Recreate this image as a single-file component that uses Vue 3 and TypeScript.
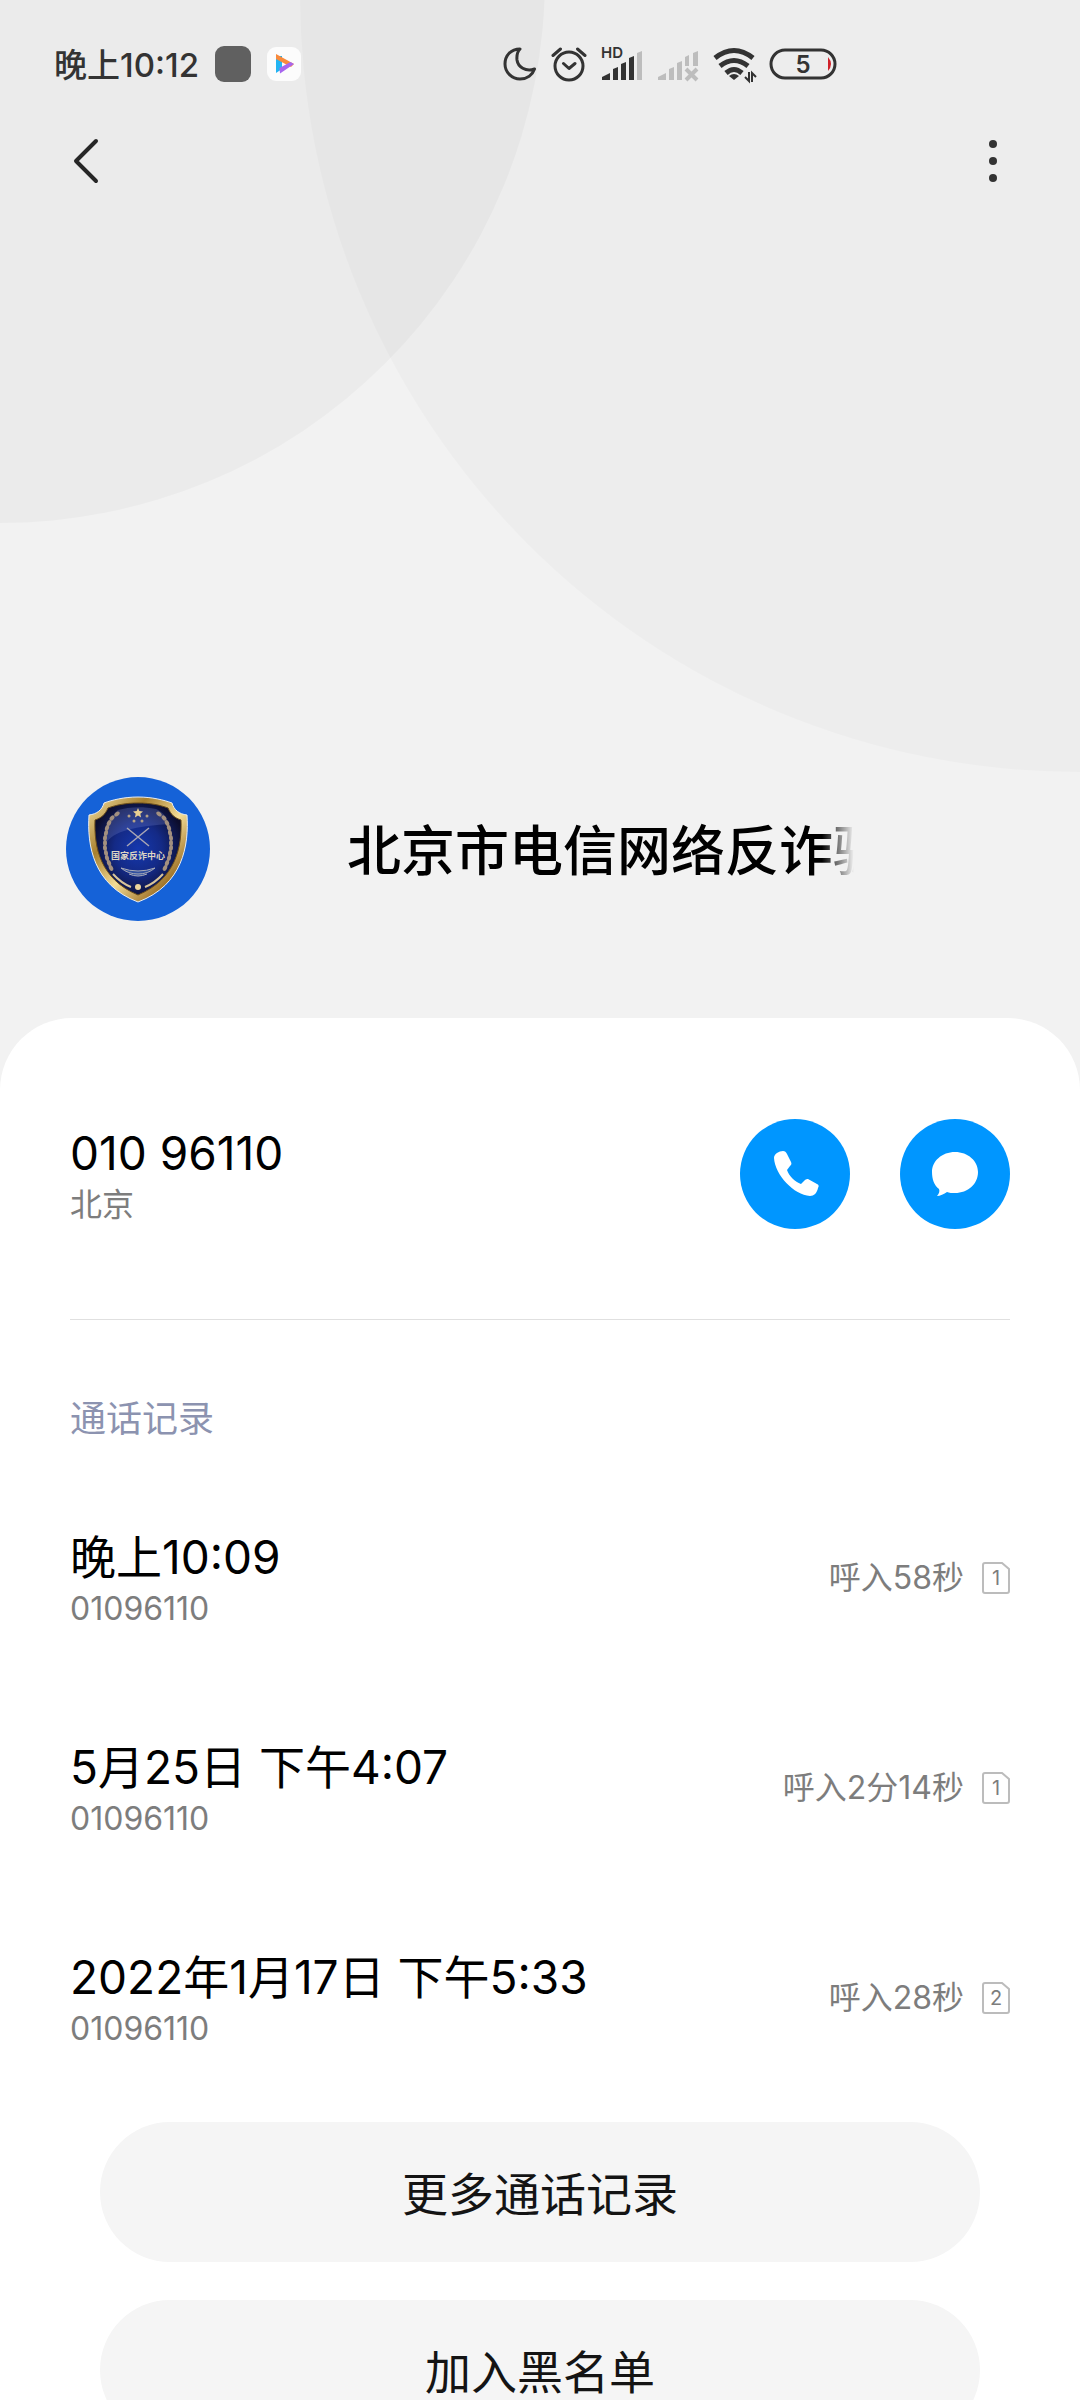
<script setup lang="ts">
interface CallRecord {
  time: string
  number: string
  duration: string
  sim: number
}

const records: CallRecord[] = [
  { time: '晚上10:09', number: '01096110', duration: '呼入58秒', sim: 1 },
  { time: '5月25日 下午4:07', number: '01096110', duration: '呼入2分14秒', sim: 1 },
  { time: '2022年1月17日 下午5:33', number: '01096110', duration: '呼入28秒', sim: 2 },
]

const actions: string[] = ['更多通话记录', '加入黑名单']

// Leaves of the laurel branch on the badge: x, y, rotation
const leaves: [number, number, number][] = [
  [51, 37, 50], [46, 41, 38], [43, 46, 28], [41, 51, 18], [40, 56, 10], [39, 61, 4],
  [39, 66, 0], [39, 71, -4], [40, 76, -8], [41, 81, -14], [43, 86, -20], [45, 91, -28],
]
</script>

<template>
  <div class="screen">
    <svg class="backdrop" viewBox="0 0 1080 1120" aria-hidden="true">
      <circle cx="0" cy="-22" r="545" />
      <circle class="soft" cx="1078" cy="-6" r="778" />
    </svg>

    <header class="status">
      <div class="status-group left">
        <span class="clock">晚上10:12</span>
        <span class="app-dot"></span>
        <svg width="34" height="34" viewBox="0 0 34 34">
          <rect width="34" height="34" rx="9" fill="#fcfcfc" />
          <path d="M9 9v17l6-4V9z" fill="#22b4f2" />
          <path d="M9 7l9 5 9 5-3 3-15-8z" fill="#f98a3c" />
          <path d="M27 17l-14 9.500-.5-5.500 11-6z" fill="#a765ee" />
        </svg>
      </div>
      <div class="status-group right">
        <svg width="34" height="36" viewBox="0 0 34 36" class="line">
          <path d="M17 3C8 3 2 9.500 2 18s7 15 15 15c7 0 12.500-4 14.500-10-9 3-16.500-2-17.500-9C13.500 9 15 5 17 3z" />
        </svg>
        <svg width="36" height="36" viewBox="0 0 36 36" class="line">
          <circle cx="18" cy="20" r="14" />
          <path d="M12.500 17.500l5.500 5 6-5M2 9.500L9.500 3M34 9.500L26.500 3" />
        </svg>
        <svg width="42" height="40" viewBox="0 -2 42 40" class="solid">
          <text x="0" y="12" class="hd">HD</text>
          <path d="M1 34v-3l8-4v7zM12 34V23l5-2v13zM20 34V18l5-2v18zM28 34V12l5-2v24z" />
          <path d="M36 34V7l5-2v29z" class="faint" />
        </svg>
        <svg width="42" height="36" viewBox="0 0 42 36" class="faint">
          <path d="M1 34v-3l8-4v7zM12 34V23l5-2v13zM20 34V17l5-2v19zM28 20v-9l4-2v11zM36 20V7l5-2v15z" />
          <path d="M29 23l11 11M40 23L29 34" class="cross" />
        </svg>
        <svg width="42" height="36" viewBox="0 0 42 36" class="wifi">
          <path d="M2 12q19-15 38 0M7 20q14-11 28 0M13 27q8-7 16 0" />
          <path d="M21 34l-5-4q5-4 10 0z" class="fill" />
          <path d="M36 26v9l-4-4M39 36v-9l4 4" class="thin" />
        </svg>
        <svg width="68" height="32" viewBox="0 0 68 32" class="line">
          <rect x="2" y="2" width="64" height="28" rx="14" />
          <path d="M59 9q6 7 0 14z" class="low" />
          <text x="34" y="25" class="level">5</text>
        </svg>
      </div>
    </header>

    <nav class="toolbar">
      <button class="icon-button" type="button" aria-label="返回">
        <svg width="28" height="48" viewBox="0 0 28 48" class="chevron"><path d="M24 4L4 24l20 20" /></svg>
      </button>
      <button class="icon-button" type="button" aria-label="更多选项">
        <svg width="12" height="48" viewBox="0 0 12 48" class="solid">
          <circle cx="6" cy="7" r="4" /><circle cx="6" cy="24" r="4" /><circle cx="6" cy="41" r="4" />
        </svg>
      </button>
    </nav>

    <section class="profile">
      <svg class="avatar" width="144" height="144" viewBox="0 0 144 144" role="img" aria-label="国家反诈中心">
        <defs>
          <linearGradient id="gold" x1="0" y1="0" x2="1" y2="1">
            <stop offset="0" stop-color="#f6e3a4" /><stop offset=".3" stop-color="#a8802f" />
            <stop offset=".55" stop-color="#f3dc96" /><stop offset=".8" stop-color="#a2762b" />
            <stop offset="1" stop-color="#ecd088" />
          </linearGradient>
          <radialGradient id="navy" cx=".5" cy=".5" r=".55">
            <stop offset="0" stop-color="#1538ae" /><stop offset=".5" stop-color="#142a86" />
            <stop offset="1" stop-color="#0c0d2c" />
          </radialGradient>
        </defs>
        <circle cx="72" cy="72" r="72" fill="#1562d8" />
        <path d="M72 20c14 0 26 3 34 6 2 7 7 11 15 12 2 30-4 70-49 87C27 108 21 68 23 38c8-1 13-5 15-12 8-3 20-6 34-6z" fill="url(#gold)" stroke="#e9edf2" stroke-width="1" />
        <path d="M72 26c12 0 22 2 30 5 3 7 7 10 13 12 1 27-5 59-43 75-38-16-44-48-43-75 6-2 10-5 13-12 8-3 18-5 30-5z" fill="url(#navy)" stroke="#6b4d1a" stroke-width="1" />
        <path d="M40 66c10-15 40-17 62-19-1-7-5-12-12-15-14-3-28-2-38 1-8 7-12 19-12 33z" fill="#7f8fd8" opacity=".25" />
        <g fill="#a3907f">
          <ellipse v-for="l in leaves" :key="l[1]" :cx="l[0]" :cy="l[1]" rx="2" ry="3" :transform="`rotate(${l[2]} ${l[0]} ${l[1]})`" />
          <g transform="matrix(-1 0 0 1 144 0)">
            <ellipse v-for="l in leaves" :key="l[1]" :cx="l[0]" :cy="l[1]" rx="2" ry="3" :transform="`rotate(${l[2]} ${l[0]} ${l[1]})`" />
          </g>
        </g>
        <path d="M47 97q8 9 18 13M97 97q-8 9-18 13" fill="none" stroke="#d8c49a" stroke-width="2" />
        <path d="M72 31l1.300 3 3.700.4-2.700 2.300.8 3.800-3.100-2-3.100 2 .8-3.800-2.700-2.300 3.700-.4z" fill="#e8cf92" />
        <g fill="#b3a187">
          <circle cx="63" cy="39" r="1.500" /><circle cx="81" cy="39" r="1.500" />
          <circle cx="68" cy="44" r="1.500" /><circle cx="76" cy="44" r="1.500" />
        </g>
        <path d="M61 51l22 18M83 51L61 69" stroke="#a9a6b4" stroke-width="1.500" />
        <text x="72" y="82" class="badge-text">国家反诈中心</text>
        <path d="M55 91q17 6 34 0-7 6-17 6t-17-6zM63 97q9 4 18 0" fill="#32509f" stroke="#a9abb8" stroke-width="1" />
        <circle cx="72" cy="110" r="3" fill="#ecd59c" />
      </svg>
      <h1 class="name">北京市电信网络反诈骗</h1>
    </section>

    <main class="sheet">
      <section class="contact">
        <div class="lines">
          <span class="primary">010 96110</span>
          <span class="secondary">北京</span>
        </div>
        <div class="contact-actions">
          <button class="round" type="button" aria-label="拨打电话">
            <svg width="110" height="110" viewBox="0 0 110 110">
              <path d="M34 39c0-4 5-7 9-7 2 0 3 1 4 3l4 8c1 2 0 3-1 4l-3 4c2 6 8 12 14 14l4-4c1-1 2-1 3-1l9 5c2 1 2 2 1 4-1 5-4 8-8 8-16-1-35-21-36-38z" />
            </svg>
          </button>
          <button class="round" type="button" aria-label="发送短信">
            <svg width="110" height="110" viewBox="0 0 110 110">
              <path d="M55 33c13 0 23 9 23 20 0 12-10 21-23 21-3 0-6 0-8-1-3 2-7 4-10 4 2-2 3-5 2-7-5-4-7-10-7-17 0-11 10-20 23-20z" />
            </svg>
          </button>
        </div>
      </section>

      <h2 class="label">通话记录</h2>
      <ul class="records">
        <li v-for="record in records" :key="record.time" class="record">
          <div class="lines">
            <span class="primary">{{ record.time }}</span>
            <span class="secondary">{{ record.number }}</span>
          </div>
          <div class="detail">
            <span class="secondary">{{ record.duration }}</span>
            <svg width="28" height="32" viewBox="0 0 28 32">
              <path d="M3 1h17l7 6v22q0 2-2 2H3q-2 0-2-2V3q0-2 2-2z" class="sim" />
              <text x="14" y="23" class="sim-number">{{ record.sim }}</text>
            </svg>
          </div>
        </li>
      </ul>

      <div class="actions">
        <button v-for="action in actions" :key="action" class="pill" type="button">{{ action }}</button>
      </div>
    </main>
  </div>
</template>

<style>
body {
  margin: 0;
}
</style>

<style scoped>
.screen {
  position: relative;
  height: 100vh;
  overflow: hidden;
  background: #f2f2f2;
  color: #000;
  font-family: Inter, "Noto Sans CJK SC", sans-serif;
}

.backdrop {
  position: absolute;
  top: 0;
  left: 0;
  width: 100%;
  fill: #000;
  fill-opacity: 0.027;
}

.backdrop .soft {
  fill-opacity: 0.02;
}

.status,
.toolbar,
.profile,
.sheet {
  position: relative;
}

.status {
  display: flex;
  justify-content: space-between;
  align-items: center;
  height: 128px;
  padding: 0 243px 0 54px;
}

.status-group {
  display: flex;
  align-items: center;
  gap: 16px;
}

.status-group.right {
  gap: 14px;
}

.clock {
  padding-top: 2px;
  color: #333;
  font-size: 33px;
  font-weight: 500;
  line-height: 40px;
}

.app-dot {
  width: 36px;
  height: 36px;
  border-radius: 9px;
  background: #606060;
}

.line {
  fill: none;
  stroke: #333;
  stroke-width: 3;
  stroke-linecap: round;
  stroke-linejoin: round;
}

.solid {
  overflow: visible;
  fill: #333;
}

.faint {
  fill: #bdbdbd;
}

.cross {
  stroke: #bdbdbd;
  stroke-width: 4;
}

.hd {
  font-size: 15px;
  font-weight: 600;
}

.wifi {
  overflow: visible;
  fill: none;
  stroke: #333;
  stroke-width: 5;
}

.wifi .fill {
  fill: #333;
  stroke: none;
}

.wifi .thin {
  stroke-width: 2;
}

.low {
  fill: #d0212a;
  stroke: none;
}

.level {
  fill: #333;
  stroke: none;
  font-size: 24px;
  font-weight: 600;
  text-anchor: middle;
}

.toolbar {
  display: flex;
  justify-content: space-between;
  align-items: center;
  height: 66px;
  padding: 0 69px 0 54px;
}

button {
  border: 0;
  padding: 0;
  color: inherit;
  font-family: inherit;
  cursor: pointer;
}

.icon-button {
  display: flex;
  justify-content: center;
  align-items: center;
  min-width: 36px;
  height: 66px;
  background: none;
}

.icon-button:first-child {
  min-width: 64px;
}

.chevron {
  fill: none;
  stroke: #262626;
  stroke-width: 4;
  stroke-linecap: round;
  stroke-linejoin: round;
}

.profile {
  display: flex;
  align-items: center;
  padding: 583px 226px 97px 66px;
}

.avatar {
  flex: none;
  margin-right: 137px;
}

.badge-text {
  fill: #ded5c4;
  font-size: 9px;
  font-weight: 700;
  text-anchor: middle;
}

.name {
  flex: 1;
  min-width: 0;
  margin: 0;
  padding-top: 6px;
  overflow: hidden;
  font-size: 54px;
  font-weight: 500;
  line-height: 80px;
  white-space: nowrap;
  mask-image: linear-gradient(to left, transparent, #000 32px);
}

.sheet {
  padding: 101px 70px 0;
  border-radius: 72px 72px 0 0;
  background: #fff;
}

.contact {
  display: flex;
  justify-content: space-between;
  align-items: center;
  padding-bottom: 90px;
  border-bottom: 1px solid #e0e0e0;
}

.contact-actions {
  display: flex;
  gap: 50px;
}

.round {
  width: 110px;
  height: 110px;
  border-radius: 50%;
  background: #0096ff;
  fill: #fff;
}

.round svg {
  display: block;
}

.lines {
  display: flex;
  flex-direction: column;
  padding-top: 6px;
}

.primary {
  font-size: 46px;
  line-height: 56px;
}

.secondary {
  color: #7d7d7d;
  font-size: 32px;
  line-height: 48px;
}

.label {
  margin: 0;
  padding: 74px 0 29px;
  color: #8c93b0;
  font-size: 36px;
  font-weight: 400;
  line-height: 50px;
}

.records {
  margin: 0;
  padding: 0;
  list-style: none;
}

.record {
  display: flex;
  justify-content: space-between;
  align-items: center;
  height: 210px;
}

.detail {
  display: flex;
  align-items: center;
  gap: 18px;
}

.sim {
  fill: none;
  stroke: #bcbcbc;
  stroke-width: 2;
}

.sim-number {
  fill: #7d7d7d;
  font-size: 20px;
  text-anchor: middle;
}

.actions {
  display: flex;
  flex-direction: column;
  gap: 38px;
  padding: 19px 30px 38px;
}

.pill {
  height: 140px;
  padding-top: 4px;
  border-radius: 70px;
  background: #f5f5f5;
  color: #141414;
  font-size: 46px;
  line-height: 56px;
}
</style>
